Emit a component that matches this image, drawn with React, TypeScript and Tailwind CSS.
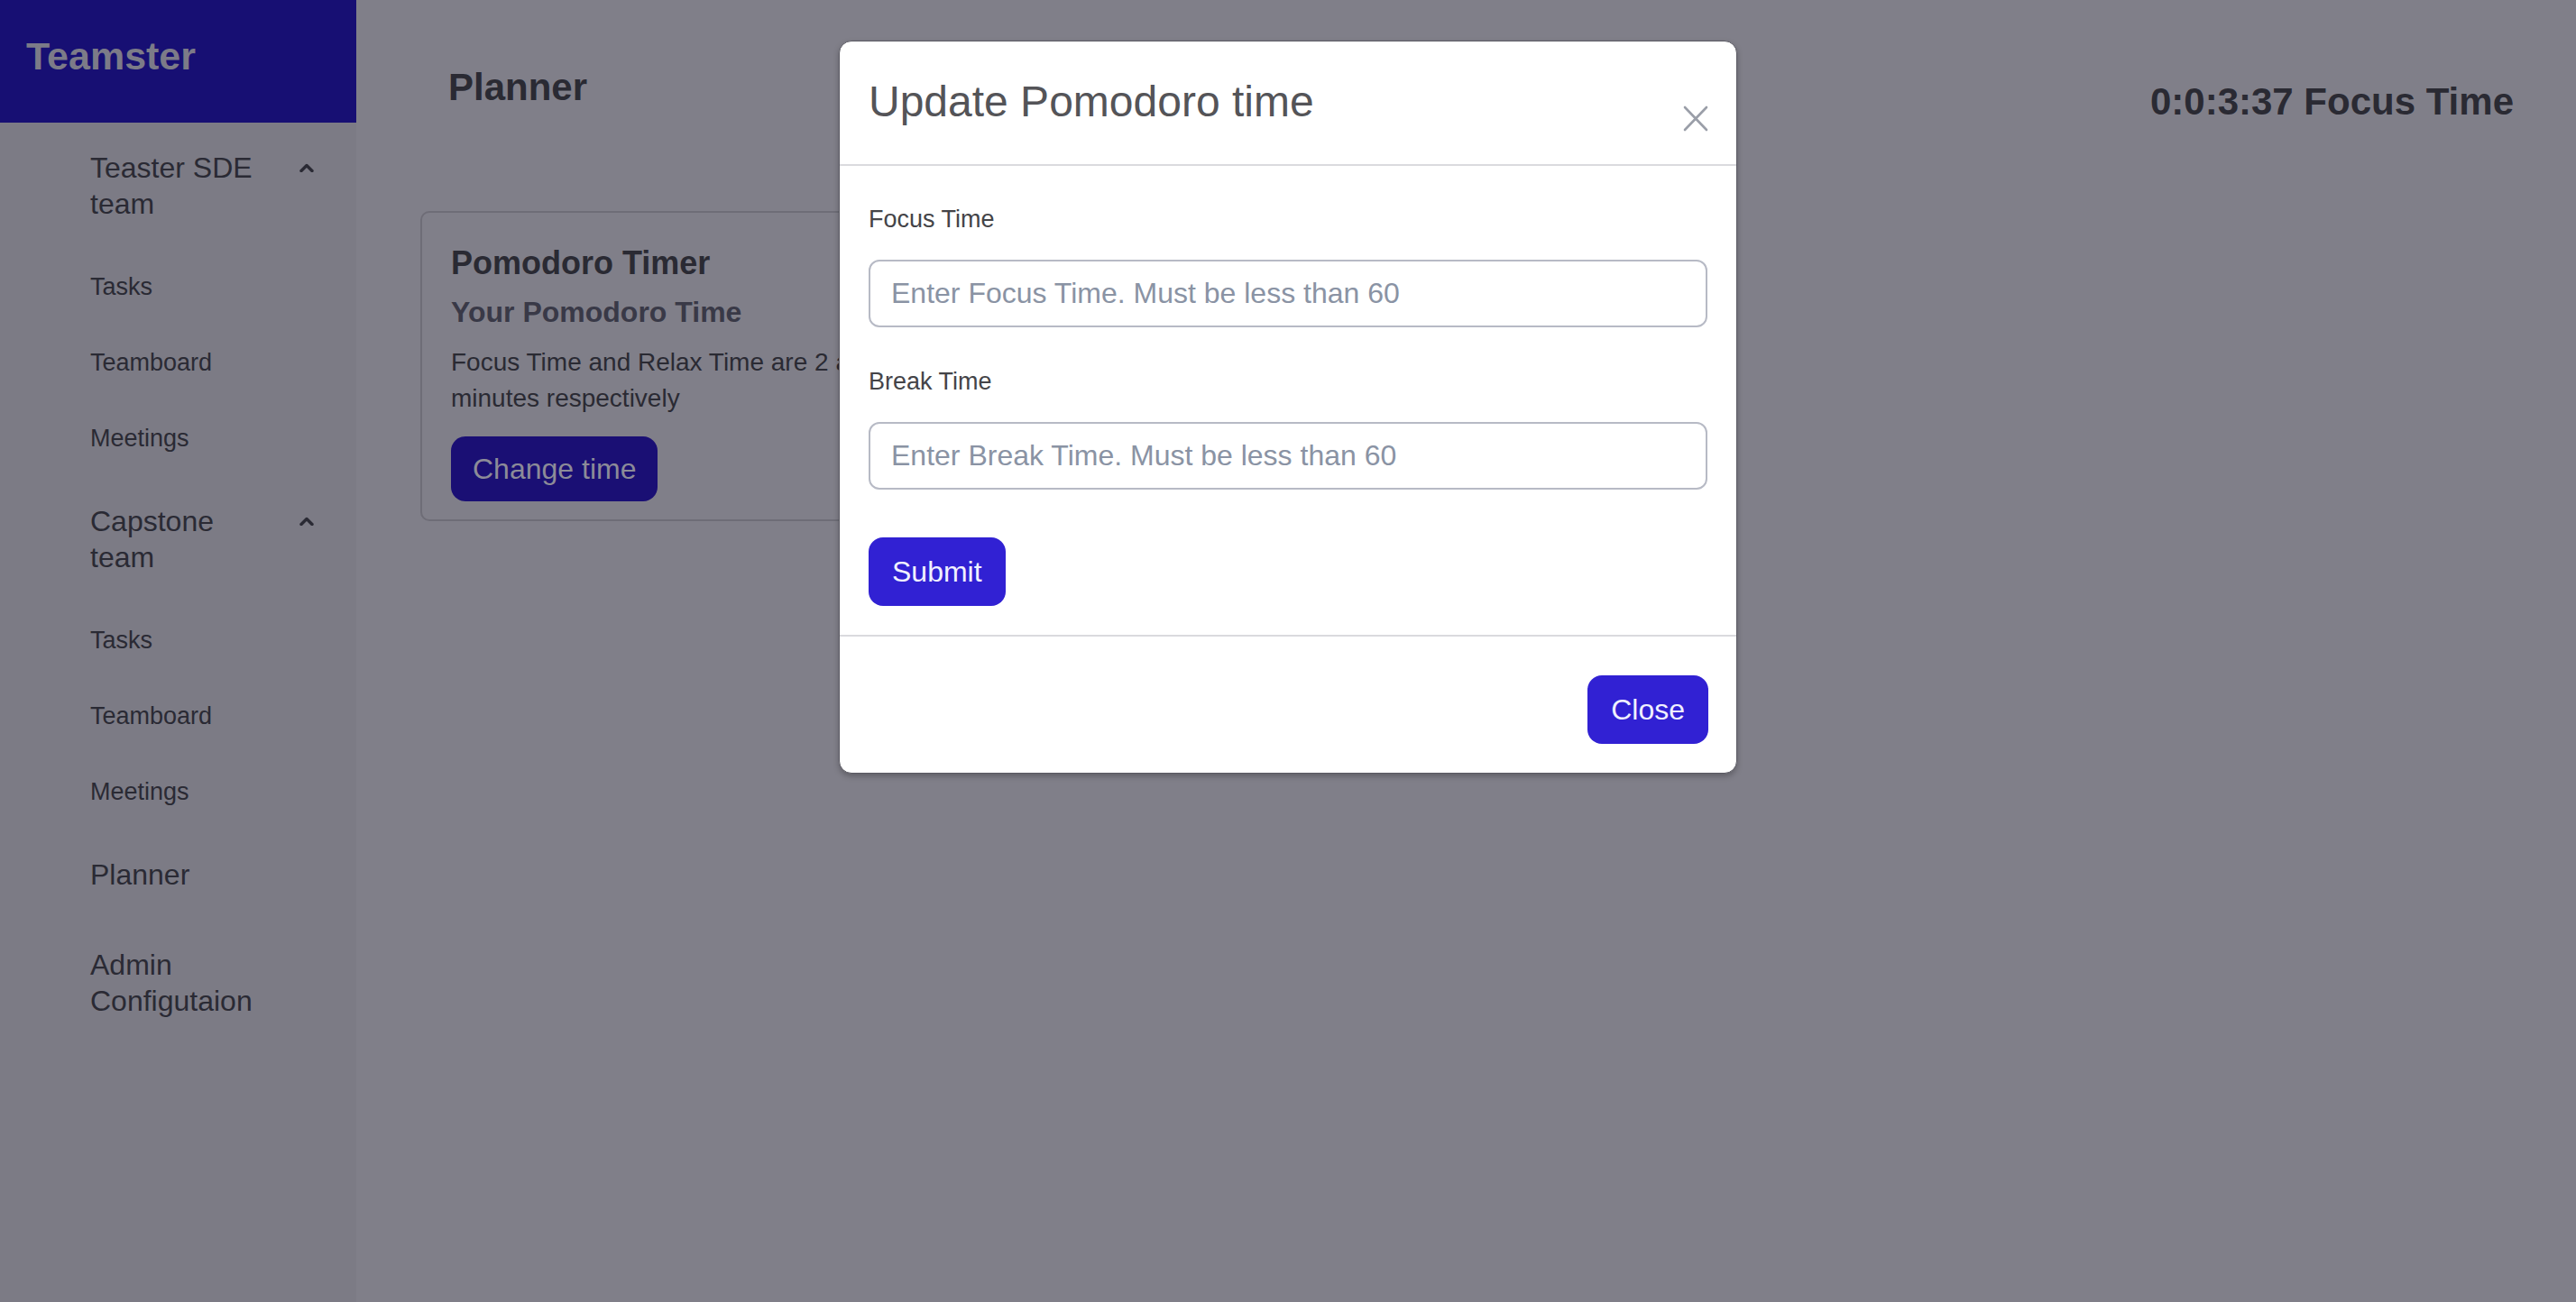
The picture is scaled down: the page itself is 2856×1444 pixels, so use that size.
import React from "react";

const font = { fontFamily: '"Liberation Sans", Arial, Helvetica, sans-serif' };

function Chevron() {
  return (
    <svg width="16" height="10" viewBox="0 0 16 10" className="shrink-0">
      <polyline points="2,8.5 8,2.5 14,8.5" fill="none" stroke="#2a2a34" strokeWidth="3.4" strokeLinecap="round" strokeLinejoin="round" />
    </svg>
  );
}

function Group({ title, items }: { title: string; items: string[] }) {
  return (
    <div>
      <div className="flex justify-between pl-[100px] pr-[47px] py-[30px] text-[32px] leading-[40px] text-[#2a2a34]">
        <span className="w-[200px]">{title}</span>
        <div className="h-[40px] flex items-center">
          <Chevron />
        </div>
      </div>
      {items.map((it) => (
        <div key={it} className="pl-[100px] h-[84px] leading-[84px] text-[27px] text-[#2a2a34]">
          {it}
        </div>
      ))}
    </div>
  );
}

function TopItem({ title }: { title: string }) {
  return (
    <div className="pl-[100px] pr-[47px] py-[30px] text-[32px] leading-[40px] text-[#2a2a34]">
      <span className="block w-[200px]">{title}</span>
    </div>
  );
}

export default function App() {
  return (
    <div style={font} className="relative w-full h-[1444px] flex bg-[#807f89] overflow-hidden">
      <aside className="w-[395px] shrink-0 bg-[#7c7b85] flex flex-col">
        <div className="h-[136px] bg-[#170f73] pl-[29px] pt-[36px]">
          <span className="text-[43px] font-bold leading-[52px] text-[#7c7b88]">Teamster</span>
        </div>
        <nav>
          <Group title="Teaster SDE team" items={["Tasks", "Teamboard", "Meetings"]} />
          <Group title="Capstone team" items={["Tasks", "Teamboard", "Meetings"]} />
          <TopItem title="Planner" />
          <TopItem title="Admin Configutaion" />
        </nav>
      </aside>

      <main className="flex-1 flex flex-col">
        <div className="flex justify-between items-start">
          <h1 className="ml-[102px] mt-[72px] text-[42px] font-bold leading-[50px] text-[#2a2a33]">Planner</h1>
          <div className="mr-[69px] mt-[88px] text-[42px] font-bold leading-[50px] text-[#2a2a33]">0:0:3:37 Focus Time</div>
        </div>
        <div className="ml-[71px] mt-[96px] w-[620px] border-2 border-[#6e6d77] rounded-[10px] px-[32px] pt-[34px] pb-[20px]">
          <div className="text-[36px] font-bold leading-[43px] text-[#2a2a33]">Pomodoro Timer</div>
          <div className="mt-[14px] text-[32px] font-bold leading-[38px] text-[#393947]">Your Pomodoro Time</div>
          <p className="mt-[17px] text-[28px] leading-[40px] text-[#2a2a33]">
            Focus Time and Relax Time are 2 and 1 minutes respectively
          </p>
          <button className="mt-[22px] h-[72px] px-[24px] rounded-[16px] bg-[#1a0f74] text-[32px] text-[#8c8b98]">
            Change time
          </button>
        </div>
      </main>

      <div className="absolute inset-0 flex justify-center items-start">
        <div className="mt-[45px] w-[996px] bg-white rounded-[14px] border border-[#5b5a63] shadow-[0_3px_6px_rgba(0,0,0,0.25)]">
          <div className="flex justify-between items-start pl-[32px] pr-[31px] pt-[38px] pb-[36px] border-b-2 border-[#dadade]">
            <h2 className="text-[48px] leading-[58px] text-[#545458]">Update Pomodoro time</h2>
            <svg width="28" height="29" viewBox="0 0 28 29" className="mt-[33px]">
              <line x1="2" y1="2" x2="26" y2="27" stroke="#9a9ea8" strokeWidth="2.6" strokeLinecap="round" />
              <line x1="26" y1="2" x2="2" y2="27" stroke="#9a9ea8" strokeWidth="2.6" strokeLinecap="round" />
            </svg>
          </div>
          <div className="px-[32px] pt-[39px] pb-[32px] border-b-2 border-[#dadade]">
            <label className="block text-[27px] leading-[40px] text-[#444448]">Focus Time</label>
            <input
              placeholder="Enter Focus Time. Must be less than 60"
              className="mt-[25px] block w-full h-[75px] rounded-[12px] border-2 border-[#b7bac5] px-[23px] text-[32px] placeholder:text-[#8a93a4] outline-none"
            />
            <label className="mt-[40px] block text-[27px] leading-[40px] text-[#444448]">Break Time</label>
            <input
              placeholder="Enter Break Time. Must be less than 60"
              className="mt-[25px] block w-full h-[75px] rounded-[12px] border-2 border-[#b7bac5] px-[23px] text-[32px] placeholder:text-[#8a93a4] outline-none"
            />
            <button className="mt-[53px] h-[76px] px-[26px] rounded-[16px] bg-[#3121d3] text-[32px] text-[#f0f0ff]">
              Submit
            </button>
          </div>
          <div className="flex justify-end px-[31px] pt-[43px] pb-[32px]">
            <button className="h-[76px] px-[26px] rounded-[16px] bg-[#3121d3] text-[32px] text-[#f0f0ff]">
              Close
            </button>
          </div>
        </div>
      </div>
    </div>
  );
}
